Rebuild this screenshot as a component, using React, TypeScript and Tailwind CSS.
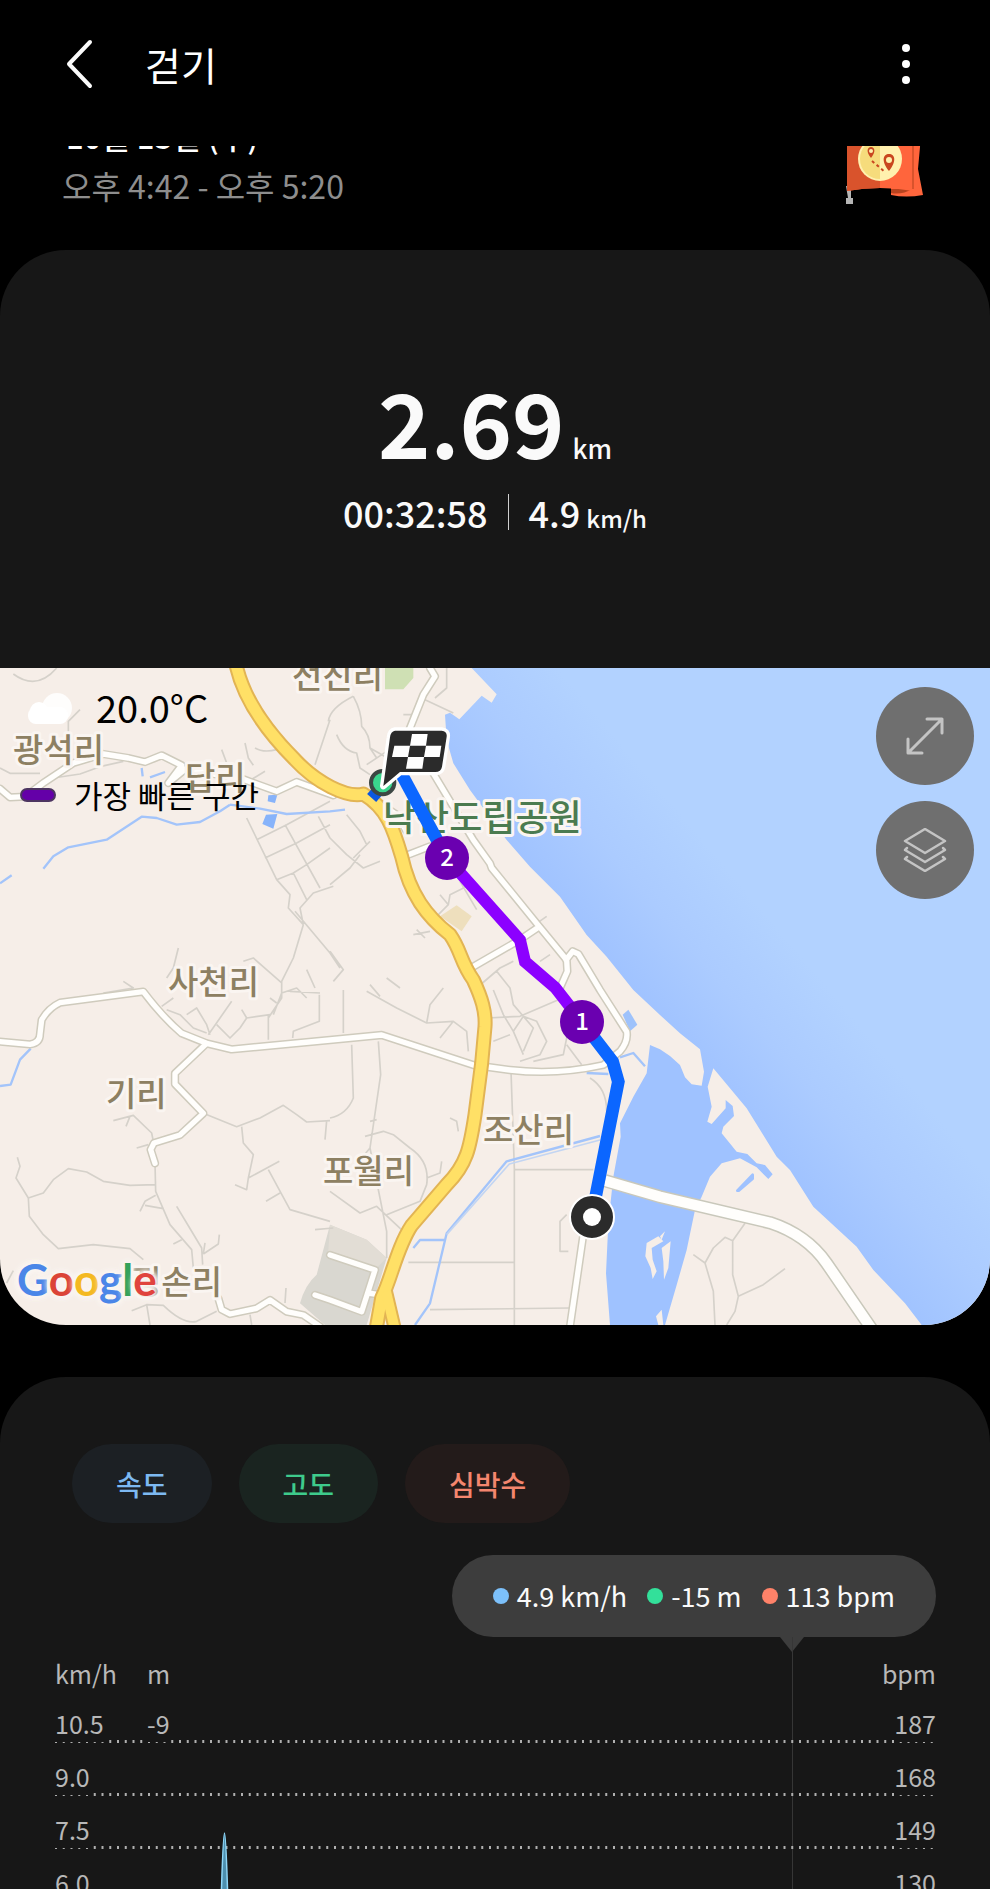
const bodyFont =
  "font-['Noto_Sans_CJK_KR','Noto_Sans',sans-serif] text-white antialiased";

const minorRoads = [
  "M40 18 Q110 70 170 0",
  "M0 300 L30 316 L120 316 M160 330 L240 318 L300 296 L370 280",
  "M205 196 L205 160 L240 125",
  "M665 245 L680 285 M735 225 L745 270 L760 292 M765 240 Q790 255 830 245 M745 340 L795 310",
  "M990 155 L970 215 L945 290 M1060 85 Q1085 130 1085 175 Q1110 200 1110 240 L1130 270",
  "M1060 85 Q990 120 985 160 M1010 200 Q1030 250 1070 255 L1080 300 L1110 320",
  "M1110 240 L1180 280 M1275 95 L1360 135 M1340 0 L1340 60 L1305 90 M1210 140 L1240 140",
  "M740 450 L830 635 L870 680 L865 720 L910 770 L880 870 L845 940 L845 990 L805 1050",
  "M770 515 L860 470 L990 400 M795 570 L890 525 L990 470 M830 635 L880 615 L920 590 L990 540",
  "M855 470 L960 660 M880 615 L920 695 M955 445 L990 510 M910 770 L900 720 L940 675 L1000 655",
  "M885 730 L990 855 L1020 900 M920 905 L945 960 M535 840 L520 900 L500 930",
  "M730 880 L760 870 L845 945 M920 990 L890 960 L845 975 M310 975 L400 960 L370 940",
  "M990 510 L1040 560 L1090 600 L1140 580 M990 650 L1050 600 L1080 560 M1060 570 L1110 520",
  "M1040 440 L1080 490 L1100 530 M1100 290 L1160 250 L1200 290",
  "M1295 760 L1345 710 L1350 680 L1410 650 M1320 680 L1345 710 M1240 800 L1290 790 M1250 785 L1275 810",
  "M1380 640 L1430 725 M1610 766 L1640 745 M1620 880 L1650 860",
  "M1430 960 L1500 900 L1540 880 M1490 910 L1530 960 L1540 1010 L1600 1080 L1570 1150",
  "M990 850 L1030 905 L1000 940 M1110 950 L1140 985 M1160 930 L1200 960",
  "M1030 966 L1030 1095 M1100 970 L1190 1020 L1250 1050 L1280 1065 L1360 1060 L1400 1090 L1405 1150",
  "M1280 1065 L1290 1010 L1330 960 M1360 1060 L1320 1110 M1480 966 L1510 1040 L1540 1090 L1570 1160",
  "M1460 1050 L1560 1045 L1700 985 M1540 1090 L1570 1045 L1610 1060 L1640 1120 L1620 1160 L1560 1180",
  "M1480 1120 L1530 1100 M1600 1180 L1690 1160 L1700 1110 M1700 1130 L1745 1190 M1660 966 L1800 1120",
  "M1055 1130 L1060 1290 Q1040 1340 990 1350 M1135 1120 L1142 1220 L1110 1440 L1160 1690 L1160 1770",
  "M1110 1360 L1130 1355 M1095 1405 L1150 1390 L1180 1400 L1230 1440 Q1290 1480 1280 1550 L1260 1600 L1160 1640",
  "M1110 1440 L1060 1500 M990 1570 L1080 1635 L1130 1615 L1210 1690 M1280 1530 L1320 1515 L1325 1480",
  "M1350 1350 L1370 1360 L1375 1390 M1533 1210 L1543 1500 L1543 1971 M1545 1505 L1780 1505",
  "M1225 1783 L1543 1783 M1290 1925 L1710 1920 M1700 1640 L1680 1660 L1680 1750 L1705 1750",
  "M1770 1230 Q1820 1260 1820 1330",
  "M610 1336 L710 1376 L780 1350 L850 1312 L890 1340 L920 1362 L990 1358 M980 1358 L975 1415",
  "M725 1376 L730 1425 L760 1460 L745 1530 L740 1565 L705 1550 M745 1530 L838 1480 M805 1505 L870 1625 L990 1660 M840 1575 L798 1600 M945 1685 L1000 1680",
  "M340 1358 L400 1342 L455 1395 L460 1420 M378 1375 L390 1345 M410 1440 L445 1430",
  "M465 1486 L467 1570 L510 1670 L575 1745 L580 1800 M467 1550 L390 1552 L310 1540 L260 1512 L205 1502 L160 1535 L130 1575 L85 1590 M52 1468 L60 1495 L48 1530 L85 1590 L88 1645 L130 1700 L175 1742 L280 1730 L390 1742 L430 1775",
  "M467 1582 L435 1600 L420 1630 M435 1612 L490 1622 M530 1615 L560 1665 L605 1740 L608 1790 M610 1758 L655 1728 L658 1700 M520 1728 L545 1715 M610 1758 L615 1725",
  "M395 1928 L440 1910 L450 1971 M440 1910 L490 1912 Q550 1970 590 1960 L650 1930 M750 1940 L755 1971 M858 1860 L855 1905 M20 1845 L40 1808",
  "M485 1015 L520 990 M500 1025 L540 1040 L580 1080 L620 1095 M560 1040 L590 1020 L620 1070 L630 1100 M625 1100 L695 1000 M650 1070 L690 1110 L720 1080 L740 1050 L810 1040 M805 1040 L805 1115 M725 1025 L740 1050",
  "M845 975 L820 1040 M810 990 L830 1005 M958 980 L958 1060 L880 1090 L878 1110 M870 970 L960 975",
  "M2235 1666 L2198 1718 L2198 1820 L2215 1885 L2205 1930 L2180 1971 M2198 1718 L2175 1708 L2140 1740 L2115 1785 L2140 1870 L2145 1971 M2080 1760 L2115 1785 M2215 1885 L2290 1850 L2355 1802",
];

const rivers = [
  "M0 646 L35 622 M130 602 L160 565 L205 538 L320 515 L425 446 L470 450 L530 470 L600 462 L660 430 L690 410",
  "M690 410 L780 422 L860 438 L990 430 L1035 425",
  "M425 300 L428 325 M450 328 L495 312",
  "M0 1254 L32 1250 L60 1175 L92 1142",
  "M1335 1716 L1260 1716 L1240 1740",
  "M1245 1971 L1290 1906 L1340 1696 L1520 1480 L1800 1404",
  "M1860 1168 L1900 1155 L1935 1195",
  "M1760 1215 L1825 1218",
];

const roads = [
  "M0 362 L30 388 L75 386 L130 345 L220 285 L310 258 L385 270 L435 282 L485 262 L545 292 L505 345 L560 300 L640 318 L720 330 L830 370 L890 342 L1000 382",
  "M0 1121 L90 1129 Q120 1125 120 1098 L125 1056 Q145 1020 180 1004 L430 971 Q490 1050 545 1096 L620 1126 L695 1144 L990 1116 L1145 1101 L1420 1191 L1530 1206 Q1670 1222 1810 1191 L1860 1150 Q1885 1120 1880 1091 L1800 966 L1735 858 L1718 850 L1698 876",
  "M1300 316 L1420 516 L1470 586 L1475 600 L1610 766 L1700 876 L1702 910 L1680 960",
  "M1420 896 L1560 815 L1612 780",
  "M1225 560 L1290 535",
  "M620 1126 L525 1216 L525 1248 L610 1336 L540 1401 L462 1425 L452 1445 L465 1486",
  "M655 1891 L665 1925 L690 1938 L770 1921 L810 1896 L860 1931 L910 1941 L960 1975",
  "M1750 1700 L1710 1975",
  "M990 1761 L1125 1806 L1085 1931 L990 1896 L945 1881 M1105 1875 L1135 1880",
  "M1290 0 L1305 25 L1270 80 L1228 185",
  "M1145 410 L1190 440 L1220 490",
];

const highway =
  "M708 -10 C730 90 790 180 885 275 C950 345 1040 390 1090 378 C1160 420 1180 480 1205 566 C1230 680 1280 745 1350 800 C1385 850 1380 880 1420 936 C1445 990 1458 1030 1455 1076 L1445 1186 L1425 1340 C1410 1440 1400 1490 1340 1550 L1235 1672 C1190 1740 1175 1830 1145 1890 L1128 1985";

const villages = [
  { name: "전진리", x: 292, y: 20 },
  { name: "광석리", x: 13, y: 94 },
  { name: "답리", x: 185, y: 122 },
  { name: "사천리", x: 168, y: 326 },
  { name: "기리", x: 106, y: 438 },
  { name: "포월리", x: 323, y: 515 },
  { name: "조산리", x: 483, y: 474 },
  { name: "정손리", x: 131, y: 626 },
];

function MapDrawing() {
  return (
    <svg viewBox="0 0 990 657" className="block w-full h-auto" aria-hidden="true">
      <defs>
        <linearGradient
          id="sea"
          gradientUnits="userSpaceOnUse"
          x1="1900"
          y1="1000"
          x2="2260"
          y2="695"
        >
          <stop offset="0" stopColor="#9fc2ff" />
          <stop offset="0.5" stopColor="#abcbff" />
          <stop offset="1" stopColor="#b2d2ff" />
        </linearGradient>
      </defs>
      <rect width="990" height="657" fill="#f6eee8" />

      {/* terrain is drawn at three times the label scale */}
      <g transform="scale(0.333333)" fill="none" strokeLinejoin="round">
        <path d="M1155 0 L1240 0 L1240 30 L1210 64 L1155 64Z" fill="#cfe0b4" />
        <path d="M1320 745 L1370 712 L1415 745 L1385 790Z" fill="#eedfbd" />
        <path
          d="M990 1670 L1100 1715 L1160 1770 L1100 1971 L975 1971 L900 1906 Q915 1850 950 1820Z"
          fill="#d9d7d0"
        />
        <path
          d="M990 1670 L1100 1715 L1160 1770 L1130 1800 L985 1750Z"
          fill="#e2ddd5"
        />
        <path
          d="M1415 0 L1490 79 L1475 104 L1445 83 L1378 154 L1350 134 L1335 140 L1340 216 L1360 286 L1410 366 L1520 516 L1590 596 L1680 686 L1760 801 L1820 866 L1900 966 L1980 1041 L2040 1096 L2100 1144 L2112 1211 L2105 1253 L2075 1249 L2055 1228 L2040 1191 L2010 1164 L1980 1144 L1950 1131 L1940 1216 L1900 1286 L1860 1366 L1862 1406 L1840 1526 L1825 1666 L1818 1816 L1830 1971 L1995 1971 L2030 1851 L2060 1746 L2085 1626 L2105 1586 L2130 1526 L2165 1486 L2220 1471 L2270 1498 L2305 1533 L2318 1519 L2295 1491 L2270 1486 L2242 1458 L2210 1451 L2165 1396 L2170 1376 L2202 1344 L2198 1314 L2177 1296 L2177 1321 L2135 1368 L2122 1361 L2135 1316 L2123 1256 L2140 1201 L2240 1321 L2330 1466 L2370 1506 L2440 1616 L2570 1736 L2620 1806 L2715 1906 L2765 1971 L2970 1971 L2970 0Z"
          fill="url(#sea)"
        />
        <path d="M2212 1568 L2258 1520 L2258 1532 L2216 1568Z" fill="#9fc2ff" stroke="#9fc2ff" strokeWidth="8" />
        <path d="M1868 1040 L1885 1025 L1912 1070 L1890 1090Z" fill="#9ec2fb" />
        <path d="M805 382 L832 380 L825 405 L803 400Z M798 440 L832 438 L820 482 L787 468Z" fill="#87b3fa" />
        <path
          d="M1975 1705 L1940 1725 L1936 1765 L1952 1800 L1958 1833 L1970 1810 L1958 1775 L1955 1740 L1990 1720 Z M2012 1720 L1985 1740 L1990 1780 L1992 1835 L2005 1800Z M1995 1690 L1980 1705 L1985 1715Z M1985 1925 L1968 1945 L1975 1971 L1990 1971Z"
          fill="#f6eee8"
        />

        <path d={minorRoads.join(" ")} stroke="#d5d1ca" strokeWidth="5" />
        <path d={rivers.join(" ")} stroke="#a3c4fa" strokeWidth="7" />
        <path d="M1340 1700 L1528 1488 L1800 1416" stroke="#c3d5f2" strokeWidth="5" />

        <path d={roads.join(" ")} stroke="#cfcbbd" strokeWidth="25" strokeLinecap="round" />
        <path d={roads.join(" ")} stroke="#fffefc" strokeWidth="16" strokeLinecap="round" />
        <path
          d="M1815 1538 L1980 1586 L2310 1664 Q2420 1700 2480 1786 L2620 1990"
          stroke="#c9c8bb"
          strokeWidth="40"
        />
        <path
          d="M1815 1538 L1980 1586 L2310 1664 Q2420 1700 2480 1786 L2620 1990"
          stroke="#fffefc"
          strokeWidth="31"
        />

        <path d={highway} stroke="#e2b454" strokeWidth="45" />
        <path d="M1158 1870 L1185 1985" stroke="#e2b454" strokeWidth="42" />
        <path d={highway} stroke="#ffe066" strokeWidth="33" />
        <path d="M1158 1870 L1185 1985" stroke="#ffe066" strokeWidth="30" />
      </g>

      <g
        fill="#8d8062"
        stroke="#faf5f1"
        strokeWidth="6"
        strokeLinejoin="round"
        paintOrder="stroke"
        className="text-[33px] font-medium"
      >
        {villages.map((v) => (
          <text key={v.name} x={v.x} y={v.y}>
            {v.name}
          </text>
        ))}
        <text x="383" y="163" fill="#4b7b50" className="text-[36px]">
          낙산도립공원
        </text>
      </g>

      {/* walked route */}
      <g transform="scale(0.333333)" fill="none">
        <path d="M1150 350 L1115 390" stroke="#0b57e0" strokeWidth="36" />
        <path d="M1200 310 L1340 569" stroke="#0b66ff" strokeWidth="38" />
        <path
          d="M1747 1063 L1838 1181 L1855 1241 L1775 1646"
          stroke="#0b66ff"
          strokeWidth="38"
        />
        <path
          d="M1340 569 L1560 816 L1575 881 L1665 958 L1747 1063"
          stroke="#8c00ff"
          strokeWidth="36"
        />
        <circle cx="1148" cy="344" r="35" fill="#3ad68d" stroke="#3d4743" strokeWidth="12" />
        <path
          d="M1185 188 H1325 Q1342 190 1340 206 L1326 296 Q1323 312 1306 312 H1200 L1150 354 L1170 208 Q1172 190 1185 188Z"
          fill="#2b2b2b"
          stroke="#fff"
          strokeWidth="20"
          strokeLinejoin="round"
          paintOrder="stroke"
        />
        <path
          d="M1236 198 H1283 L1278 233 H1230Z M1183 233 H1230 L1224 267 H1176Z M1278 233 H1324 L1319 267 H1272Z M1224 267 H1272 L1267 302 H1218Z"
          fill="#fff"
        />
      </g>
      <g fill="#6a00b0">
        <circle cx="447" cy="190" r="22" />
        <circle cx="582" cy="354" r="22" />
      </g>
      <g fill="#fff" textAnchor="middle" className="text-[24px] font-medium">
        <text x="447" y="198">
          2
        </text>
        <text x="582" y="362">
          1
        </text>
      </g>
      <circle cx="592" cy="549" r="22" fill="#2b2b2b" stroke="#fff" strokeWidth="2" />
      <circle cx="592" cy="549" r="9" fill="#fff" />
    </svg>
  );
}

function FlagBadge() {
  return (
    <svg className="mt-0.5" width="80" height="90" viewBox="0 0 80 90" aria-hidden="true">
      <path d="M2 70 H7 V82 H9 V88 H2 V82 H4Z" fill="#b5b5b5" />
      <path d="M47 60 L47 79 Q62 82 79 79 L74 53 L77 20 L60 20Z" fill="#ff653c" />
      <path d="M47 73 L68 73 Q58 79 47 77Z" fill="#b8431f" />
      <path d="M3 8 H69 V75 Q36 69 3 75Z" fill="#ff653c" />
      <path d="M3 8 H36 V72 Q20 72 3 75Z" fill="#d9532c" />
      <path d="M69 20 V73" stroke="#d9532c" strokeWidth="2" />
      <circle cx="36" cy="43" r="22" fill="#fff0ae" />
      <path d="M36 23 A20 20 0 0 0 36 63Z" fill="#f6dc7c" />
      <path
        d="M27 42 C22 36 23 31 27 31 S32 36 27 42Z M45 55 C37 45 39 38 45 38 S53 45 45 55Z"
        fill="#c9461f"
      />
      <circle cx="27" cy="35" r="2" fill="#fff0ae" />
      <circle cx="45" cy="44" r="3" fill="#fff0ae" />
      <path d="M28 45 L41 56" stroke="#c9461f" strokeWidth="2" strokeDasharray="3 3" />
    </svg>
  );
}

function ActivityMap() {
  return (
    <div className="relative">
      <MapDrawing />
      <div className="absolute left-5 top-[19px] text-black">
        <div className="flex items-center gap-6 h-10">
          <svg width="52" height="40" viewBox="0 0 52 40" fill="#fff" aria-hidden="true">
            <circle cx="37" cy="21" r="15" fillOpacity="0.85" />
            <circle cx="19" cy="24" r="9" />
            <rect x="8" y="20" width="40" height="17" rx="8" />
          </svg>
          <span className="text-[38px] leading-10">20.0°C</span>
        </div>
        <div className="flex items-center gap-[18px] mt-12">
          <span className="w-9 h-[14px] rounded-full bg-[#6400a8] border-2 border-[#4d3561]" />
          <span className="text-[31px] leading-10">가장 빠른 구간</span>
        </div>
      </div>
      <div className="absolute right-4 top-[19px] flex flex-col gap-4">
        <button
          aria-label="지도 확대"
          className="flex items-center justify-center size-[98px] rounded-full bg-[#6f6f6f]"
        >
          <svg width="40" height="40" viewBox="0 0 40 40" fill="none" stroke="#c4c4c4" strokeWidth="3" strokeLinecap="round" strokeLinejoin="round">
            <path d="M3 37 L37 3 M22 3 H37 V17 M3 23 V37 H17" />
          </svg>
        </button>
        <button
          aria-label="지도 유형"
          className="flex items-center justify-center size-[98px] rounded-full bg-[#6f6f6f]"
        >
          <svg width="44" height="44" viewBox="0 0 44 44" fill="none" stroke="#c4c4c4" strokeWidth="2.5" strokeLinecap="round" strokeLinejoin="round">
            <path d="M22 1 L42 13 L22 25 L2 13Z" />
            <path d="M4 20 L2 22 L22 34 L42 22 L40 20" />
            <path d="M4 29 L2 31 L22 43 L42 31 L40 29" />
          </svg>
        </button>
      </div>
      <div className="absolute left-[17px] bottom-[18px] font-['Lato',sans-serif] font-bold text-[44px] leading-[56px] text-[#4a86e8] [text-shadow:0_0_4px_#faf5f1,0_0_4px_#faf5f1,0_0_6px_#faf5f1,0_0_6px_#faf5f1,0_0_8px_#faf5f1,0_0_8px_#faf5f1]">
        G<span className="text-[#db4437]">o</span>
        <span className="text-[#f4b921]">o</span>g
        <span className="text-[#34a25a]">l</span>
        <span className="text-[#e0443e]">e</span>
      </div>
    </div>
  );
}

const rows = [
  { speed: "10.5", altitude: "-9", heart: "187" },
  { speed: "9.0", altitude: "", heart: "168" },
  { speed: "7.5", altitude: "", heart: "149" },
  { speed: "6.0", altitude: "", heart: "130" },
];

function Chart() {
  return (
    <div className="relative ml-[55px] mr-[54px] pt-6 text-[25px] text-[#b8b8b8]">
      <div className="absolute right-[143px] top-0 h-full w-px bg-[#363636]" />
      <div className="flex leading-6">
        <span className="w-[92px]">km/h</span>
        <span>m</span>
        <span className="ml-auto">bpm</span>
      </div>
      <div className="pt-1 leading-[38px]">
        {rows.map((row) => (
          <div key={row.speed} className="relative flex items-end h-[53px]">
            <svg className="absolute left-0 -bottom-px w-full h-[3px]" aria-hidden="true">
              <line x1="0" y1="1.5" x2="100%" y2="1.5" stroke="#b0b0b0" strokeWidth="3" strokeDasharray="2 5.75" />
            </svg>
            <span className="relative min-w-9 bg-[#171717]">{row.speed}</span>
            {row.altitude && (
              <span className="absolute left-[92px] bottom-0 bg-[#171717]">
                {row.altitude}
              </span>
            )}
            <span className="relative ml-auto bg-[#171717]">{row.heart}</span>
          </div>
        ))}
      </div>
      <svg className="absolute left-[165px] top-[195px]" width="9" height="70" viewBox="0 0 9 70" aria-hidden="true">
        <path d="M1 70 C2 45 3 1 4.5 1 S7 45 8 70Z" fill="#4d8fae" stroke="#8fd6f7" strokeWidth="1.5" />
      </svg>
    </div>
  );
}

export default function App() {
  return (
    <div className={`flex flex-col h-screen overflow-hidden bg-black ${bodyFont}`}>
      <header className="flex items-center h-[146px] shrink-0 pl-[66px] pr-[72px] pb-[18px]">
        <button aria-label="뒤로">
          <svg width="28" height="50" viewBox="0 0 28 50" fill="none" stroke="#fafafa" strokeWidth="4" strokeLinecap="round" strokeLinejoin="round">
            <path d="M24 3 L3 25 L24 47" />
          </svg>
        </button>
        <h1 className="ml-[51px] text-[39px] leading-[48px]">걷기</h1>
        <button aria-label="더보기" className="ml-auto">
          <svg width="24" height="44" viewBox="0 0 24 44" fill="#fff">
            <circle cx="12" cy="6" r="4" />
            <circle cx="12" cy="22" r="4" />
            <circle cx="12" cy="38" r="4" />
          </svg>
        </button>
      </header>

      <main className="flex-1 min-h-0 overflow-hidden">
        {/* scrolled part way under the header */}
        <div className="-mt-8">
          <div className="flex justify-between pl-[62px] pr-[66px] h-[136px]">
            <div>
              <p className="pl-1 mb-1 text-[31px] leading-[44px] font-medium">
                10월 13일 (수)
              </p>
              <p className="text-[32px] leading-[46px] text-[#8e8e8e]">
                오후 4:42 - 오후 5:20
              </p>
            </div>
            <FlagBadge />
          </div>

          <section className="overflow-hidden rounded-[66px] bg-[#171717]">
            <div className="flex flex-col items-center h-[418px] pt-[126px] font-medium text-[#fafafa]">
              <p className="flex items-baseline gap-2">
                <span className="text-[89px] leading-[90px] font-bold">2.69</span>
                <span className="text-[26px] leading-8">km</span>
              </p>
              <div className="flex items-center h-12 gap-5 mt-[22px]">
                <span className="text-[36px] leading-12">00:32:58</span>
                <span className="w-px h-9 bg-[#d0d0d0]" />
                <p className="flex items-baseline gap-1.5">
                  <span className="text-[36px] leading-12">4.9</span>
                  <span className="text-[24px] leading-8">km/h</span>
                </p>
              </div>
            </div>
            <ActivityMap />
          </section>

          <section className="mt-[52px] pt-[67px] rounded-t-[66px] bg-[#171717]">
            <div className="flex gap-[27px] pl-[72px] text-[28px] font-medium">
              <button className="h-[79px] px-11 rounded-full bg-[#1c2024] text-[#7db9f2]">
                속도
              </button>
              <button className="h-[79px] px-11 rounded-full bg-[#1a2420] text-[#3ecb8c]">
                고도
              </button>
              <button className="h-[79px] px-11 rounded-full bg-[#231b1a] text-[#f4866e]">
                심박수
              </button>
            </div>
            <div className="flex justify-end mt-8 mr-[54px]">
              <div className="relative flex items-center gap-5 h-[82px] px-[41px] rounded-full bg-[#3d3d3d] text-[27px] text-[#fafafa]">
                <span className="flex items-center gap-2">
                  <i className="size-4 rounded-full bg-[#7cc0fa]" />
                  4.9 km/h
                </span>
                <span className="flex items-center gap-2">
                  <i className="size-4 rounded-full bg-[#33e09a]" />
                  -15 m
                </span>
                <span className="flex items-center gap-2">
                  <i className="size-4 rounded-full bg-[#ff8269]" />
                  113 bpm
                </span>
                <svg className="absolute right-[132px] top-full" width="24" height="15" viewBox="0 0 24 15" fill="#3d3d3d">
                  <path d="M0 0 H24 L12 15Z" />
                </svg>
              </div>
            </div>
            <Chart />
          </section>
        </div>
      </main>
    </div>
  );
}
